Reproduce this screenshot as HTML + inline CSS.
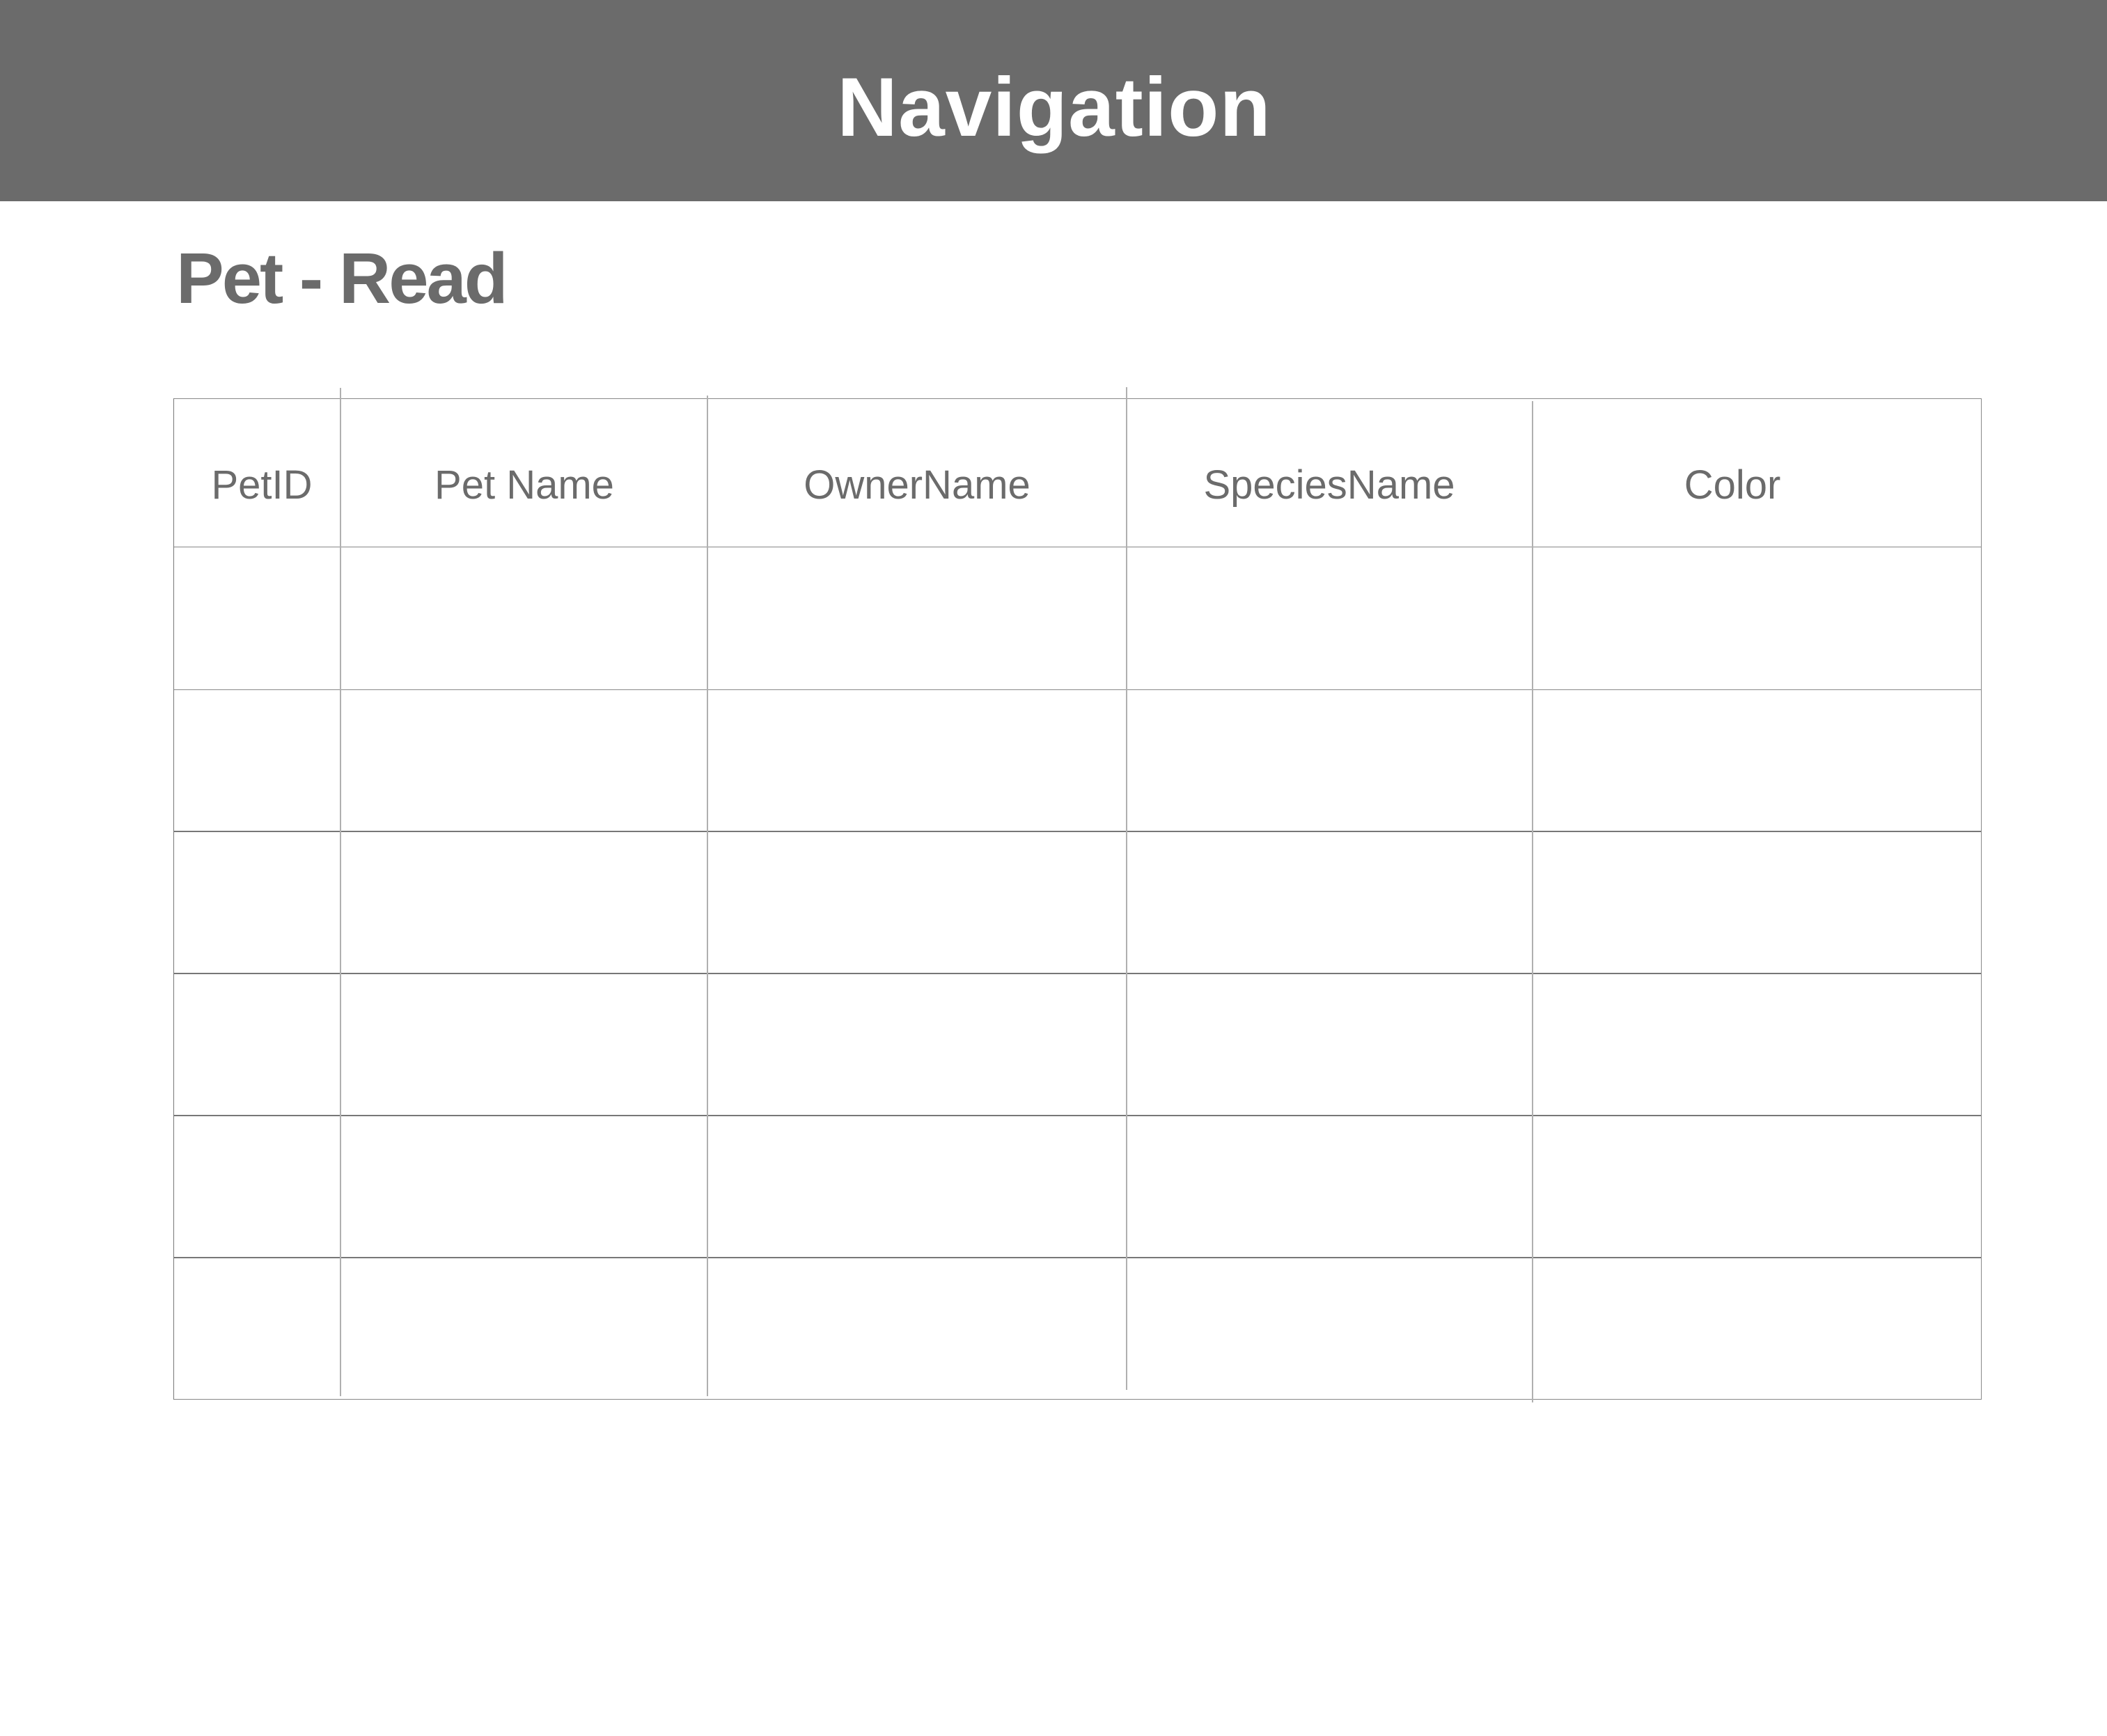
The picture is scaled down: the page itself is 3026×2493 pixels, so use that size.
<!DOCTYPE html>
<html><head><meta charset="utf-8"><style>
html,body{margin:0;padding:0;background:#fff;}
body{width:3026px;height:2493px;position:relative;overflow:hidden;font-family:"Liberation Sans",sans-serif;color:#6b6b6b;}
.hdr{position:absolute;left:0;top:0;width:3026px;height:289px;background:#6b6b6b;}
.nav{position:absolute;left:0;width:3026px;top:84px;text-align:center;color:#fff;font-weight:bold;font-size:120px;line-height:140px;padding-left:1px;letter-spacing:1px;}
.title{position:absolute;left:253px;top:340px;font-weight:bold;font-size:103px;line-height:120px;letter-spacing:-3px;}
.h{position:absolute;background:#777;height:2px;}
.v{position:absolute;background:#b0b0b0;width:2px;}
.t{position:absolute;font-size:58px;line-height:70px;top:662px;white-space:nowrap;transform:translateX(-50%);}
</style></head><body>
<div class="hdr"></div>
<div class="nav">Navigation</div>
<div class="title">Pet - Read</div>

<div class="h" style="left:249px;width:2597px;top:572px;height:1px;background:#888"></div>
<div class="h" style="left:249px;width:2597px;top:785px;height:1px;background:#888"></div>
<div class="h" style="left:249px;width:2597px;top:990px;height:1px;background:#888"></div>
<div class="h" style="left:249px;width:2597px;top:1193px;"></div>
<div class="h" style="left:249px;width:2597px;top:1397px;"></div>
<div class="h" style="left:249px;width:2597px;top:1601px;"></div>
<div class="h" style="left:249px;width:2597px;top:1805px;"></div>
<div class="h" style="left:249px;width:2597px;top:2009px;height:1px;background:#888"></div>

<div class="v" style="left:249px;top:572px;height:1438px;width:1px;background:#777"></div>
<div class="v" style="left:2845px;top:572px;height:1438px;width:1px;background:#888"></div>
<div class="v" style="left:488px;top:557px;height:1448px;"></div>
<div class="v" style="left:1015px;top:568px;height:1437px;"></div>
<div class="v" style="left:1617px;top:556px;height:1440px;"></div>
<div class="v" style="left:2200px;top:576px;height:1438px;"></div>

<div class="t" style="left:376px">PetID</div>
<div class="t" style="left:753px">Pet Name</div>
<div class="t" style="left:1317px">OwnerName</div>
<div class="t" style="left:1909px">SpeciesName</div>
<div class="t" style="left:2488px">Color</div>
</body></html>
